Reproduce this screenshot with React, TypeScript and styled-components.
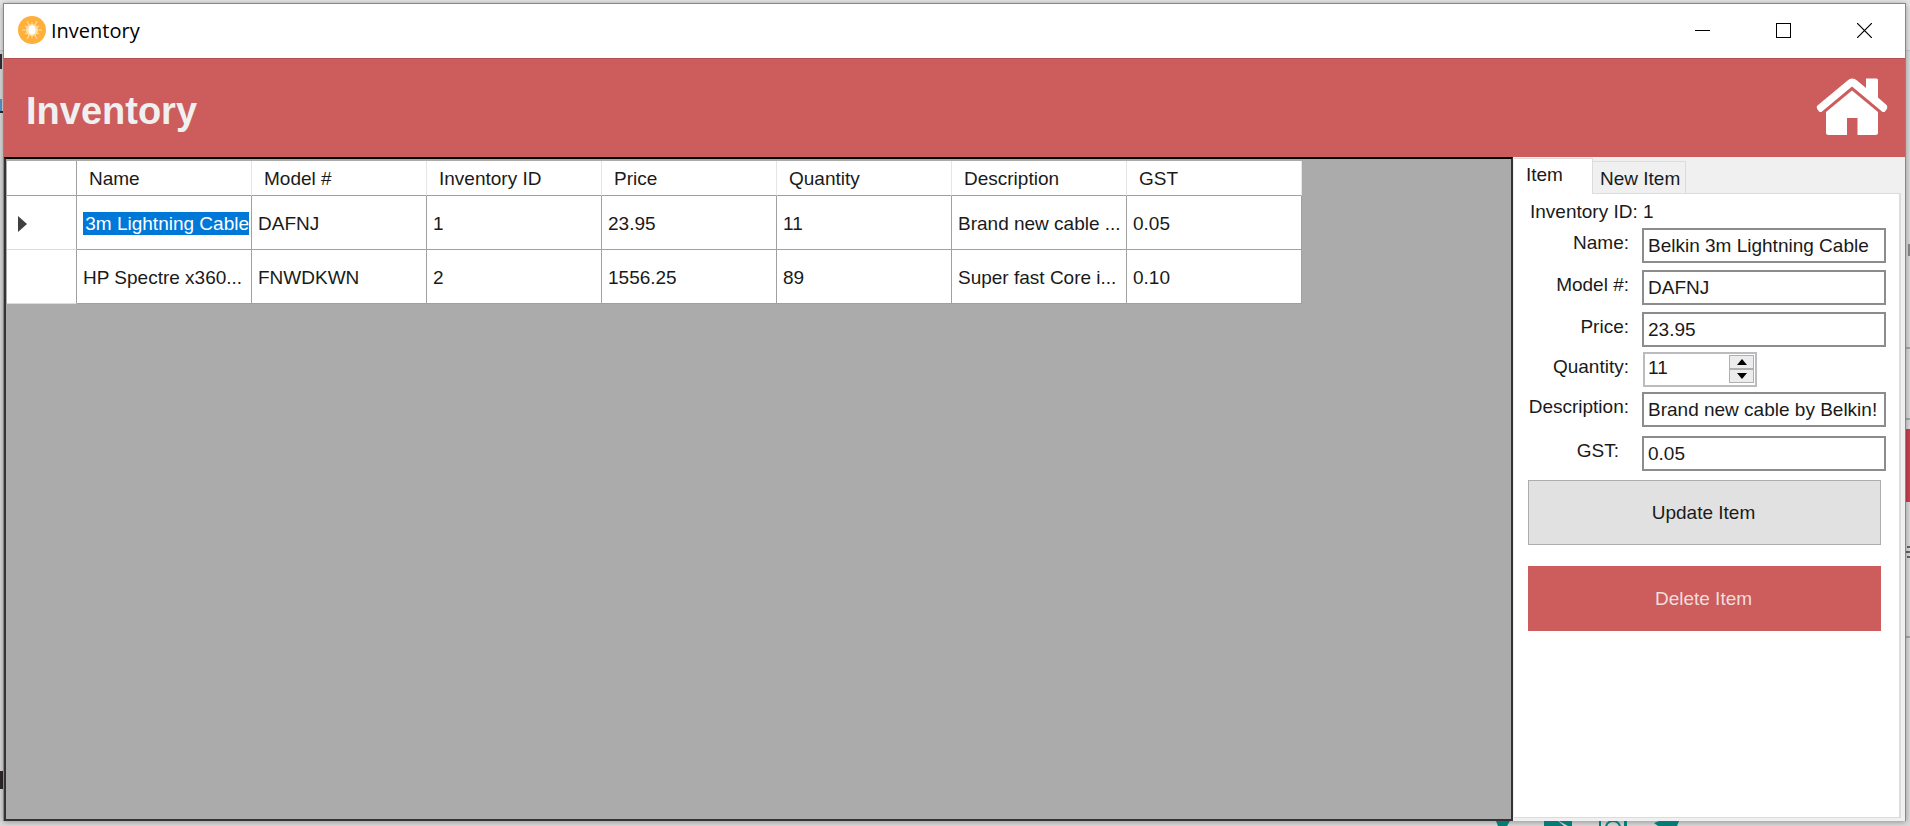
import React from "react";
import styled, { createGlobalStyle } from "styled-components";

const sans = `"Liberation Sans", Arial, sans-serif`;
const indianRed = "#cd5c5c";

const GlobalStyle = createGlobalStyle`
  *, *::before, *::after { box-sizing: border-box; }
  body { margin: 0; background: #e3e3e3; font-family: ${sans}; font-size: 19px; line-height: 24px; color: #1a1a1a; }
  button, input { font: inherit; color: inherit; border-radius: 0; margin: 0; }
`;

const Desktop = styled.div`
  position: relative;
  display: flex;
  min-height: 100vh;
  padding: 3px 4px 5px 3px;
  overflow: hidden;
  background: linear-gradient(#e6e6e6 0 50px, #c8c8c8 50px 51px, #dcdcdc 51px);
`;

/* Slivers of the page lying behind the window */
const Behind = styled.span<{ $side: "left" | "right"; $top: number; $height: number; $width: number; $color: string }>`
  position: absolute;
  ${(p) => p.$side}: 0;
  top: ${(p) => p.$top}px;
  width: ${(p) => p.$width}px;
  height: ${(p) => p.$height}px;
  background: ${(p) => p.$color};
`;

const BehindGlyphs = styled.svg`
  position: absolute;
  right: 230px;
  bottom: 0;
  width: 184px;
  height: 5px;
`;

const Window = styled.main`
  position: relative;
  flex: 1;
  min-width: 0;
  display: flex;
  flex-direction: column;
  background: #f0f0f0;
  border: 1px solid #4a9db5;
  border-bottom: 0;
  box-shadow: 0 1px 6px rgba(0, 0, 0, 0.35);
`;

const TitleBar = styled.div`
  display: flex;
  align-items: center;
  height: 54px;
  padding-left: 14px;
  background: #fff;
`;

const AppIcon = styled.svg`
  width: 28px;
  height: 28px;
  margin: 0 5px 2px 0;
`;

const Caption = styled.span`
  flex: 1;
  font-family: "Open Sans", "Segoe UI", sans-serif;
  font-size: 20px;
  color: #000;
`;

const CaptionButton = styled.button`
  display: grid;
  place-items: center;
  width: 81px;
  height: 54px;
  padding: 0 0 2px;
  border: 0;
  background: transparent;
`;

const Header = styled.header`
  display: flex;
  align-items: center;
  justify-content: space-between;
  height: 99px;
  padding: 0 17px 0 22px;
  background: ${indianRed};
  border-top: 1px solid #b65050;
`;

const Title = styled.h1`
  margin: 0;
  padding-top: 6px;
  font-size: 38px;
  line-height: 44px;
  color: #f0f0f0;
`;

const HomeButton = styled.button`
  display: block;
  width: 72px;
  height: 60px;
  padding: 0;
  border: 0;
  background: transparent;
  svg { display: block; }
`;

const Body = styled.div`
  flex: 1;
  display: flex;
`;

const GridPanel = styled.section`
  flex: 1;
  min-width: 0;
  padding: 2px 0 0 1px;
  background: #ababab;
  border: 2px solid #333;
  border-top-color: #000;
`;

const Table = styled.table`
  table-layout: fixed;
  width: 1295px;
  border-collapse: separate;
  border-spacing: 0;
  background: #fff;
`;

const Corner = styled.td`
  width: 70px;
  border-right: 1px solid #a0a0a0;
  border-bottom: 1px solid #a0a0a0;
`;

const ColumnHead = styled.th`
  width: 175px;
  height: 35px;
  padding: 2px 0 0 12px;
  text-align: left;
  font-weight: 400;
  border-right: 1px solid #e5e5e5;
  border-bottom: 1px solid #a0a0a0;
`;

const RowHead = styled.td`
  height: 54px;
  padding: 2px 0 0 11px;
  border-right: 1px solid #a0a0a0;
  border-bottom: 1px solid #dcdcdc;
  svg { display: block; }
`;

const Cell = styled.td`
  height: 54px;
  padding: 2px 2px 0 6px;
  white-space: nowrap;
  overflow: hidden;
  border-right: 1px solid #a0a0a0;
  border-bottom: 1px solid #a0a0a0;
`;

const Selection = styled.span`
  display: flex;
  justify-content: flex-end;
  height: 23px;
  line-height: 24px;
  overflow: hidden;
  background: #0078d7;
  color: #fff;
`;

const SidePanel = styled.aside`
  flex: 0 0 392px;
  display: flex;
  flex-direction: column;
  padding: 1px 4px 3px 1px;
`;

const Tabs = styled.div`
  display: flex;
  align-items: flex-end;
  height: 35px;
`;

const Tab = styled.button<{ $active?: boolean }>`
  position: relative;
  height: ${(p) => (p.$active ? 36 : 32)}px;
  width: ${(p) => (p.$active ? 79 : 93)}px;
  margin-bottom: ${(p) => (p.$active ? -1 : 0)}px;
  padding: ${(p) => (p.$active ? "0 0 4px 12px" : "2px 0 0 7px")};
  text-align: left;
  white-space: nowrap;
  background: ${(p) => (p.$active ? "#fff" : "#f0f0f0")};
  border: 1px solid #dcdcdc;
  border-width: 1px 1px 0 0;
`;

const TabPage = styled.div`
  flex: 1;
  padding: 6px 13px 12px 14px;
  background: #fff;
  border: solid #dcdcdc;
  border-width: 1px 2px 1px 0;
`;

const ItemId = styled.p`
  margin: 0 0 4px;
  padding-left: 2px;
`;

const Form = styled.form`
  display: grid;
  grid-template-columns: 101px 1fr;
  grid-template-rows: 42px 42px 40px 40px 44px 44px;
  column-gap: 13px;
  align-items: start;
`;

const Label = styled.label<{ $inset?: boolean }>`
  padding: 3px ${(p) => (p.$inset ? 10 : 0)}px 0 0;
  text-align: right;
  white-space: nowrap;
`;

const TextBox = styled.input`
  width: 100%;
  height: 35px;
  padding: 0 3px 0 4px;
  background: #fff;
  border: 2px solid #8c8c8c;
  outline: 0;
`;

const Spinner = styled.div`
  display: flex;
  width: 114px;
  height: 35px;
  margin-left: 1px;
  padding: 1px;
  border: 2px solid #bcbcc0;
`;

const SpinnerInput = styled.input`
  flex: 1;
  min-width: 0;
  padding: 0 0 4px 2px;
  border: 0;
  outline: 0;
`;

const SpinnerButtons = styled.div`
  display: flex;
  flex-direction: column;
  width: 25px;
  height: 28px;
`;

const SpinnerButton = styled.button`
  flex: 1;
  display: grid;
  place-items: center;
  padding: 0;
  background: #ececec;
  border: 1px solid #b0b0b0;
`;

const ActionButton = styled.button<{ $danger?: boolean }>`
  grid-column: 1 / -1;
  display: block;
  width: calc(100% - 5px);
  height: 65px;
  margin-bottom: 21px;
  padding: 0 2px 0 0;
  background: ${(p) => (p.$danger ? indianRed : "#e1e1e1")};
  color: ${(p) => (p.$danger ? "#f0dede" : "#1a1a1a")};
  border: ${(p) => (p.$danger ? `1px solid ${indianRed}` : "1px solid #adadad")};
`;

const columns = ["Name", "Model #", "Inventory ID", "Price", "Quantity", "Description", "GST"];
const rows = [
  ["Belkin 3m Lightning Cable", "DAFNJ", "1", "23.95", "11", "Brand new cable ...", "0.05"],
  ["HP Spectre x360...", "FNWDKWN", "2", "1556.25", "89", "Super fast Core i...", "0.10"],
];

const rays = Array.from({ length: 12 }, (_, i) => i * 30);

export default function App() {
  return (
    <Desktop>
      <GlobalStyle />
      <Behind $side="left" $top={54} $height={15} $width={2} $color="#3b2a35" />
      <Behind $side="left" $top={99} $height={12} $width={2} $color="#5b95d0" />
      <Behind $side="left" $top={111} $height={2} $width={3} $color="#2b2b2b" />
      <Behind $side="left" $top={771} $height={18} $width={3} $color="#30282c" />
      <Behind $side="right" $top={244} $height={12} $width={2} $color="#8a8a8a" />
      <Behind $side="right" $top={347} $height={2} $width={4} $color="#aaa" />
      <Behind $side="right" $top={418} $height={2} $width={4} $color="#aaa" />
      <Behind $side="right" $top={429} $height={73} $width={4} $color="#c9424f" />
      <Behind $side="right" $top={546} $height={2} $width={3} $color="#666" />
      <Behind $side="right" $top={551} $height={2} $width={4} $color="#666" />
      <Behind $side="right" $top={556} $height={2} $width={3} $color="#666" />
      <Behind $side="right" $top={636} $height={2} $width={4} $color="#aaa" />

      <Window>
        <TitleBar>
          <AppIcon viewBox="0 0 28 28" aria-hidden="true">
            <circle cx="14" cy="14" r="14" fill="#ffb03b" />
            <g stroke="#fff" strokeWidth="1" opacity="0.55">
              {rays.map((a) => (
                <path key={a} d={a % 60 ? "M14 9V4" : "M14 9V6"} transform={`rotate(${a} 14 14)`} />
              ))}
            </g>
            <circle cx="14" cy="14" r="6" fill="#ffdfa6" />
            <ellipse cx="14" cy="14" rx="3.5" ry="4.5" fill="#fff" />
          </AppIcon>
          <Caption>Inventory</Caption>
          <CaptionButton aria-label="Minimize">
            <svg width="15" height="15" shapeRendering="crispEdges"><path d="M0 7.5H15" stroke="#000" /></svg>
          </CaptionButton>
          <CaptionButton aria-label="Maximize">
            <svg width="15" height="15" shapeRendering="crispEdges"><path d="M.5.5h14v14H.5z" stroke="#000" fill="none" /></svg>
          </CaptionButton>
          <CaptionButton aria-label="Close">
            <svg width="15" height="15"><path d="M0 0L15 15M15 0L0 15" stroke="#000" strokeWidth="1.2" /></svg>
          </CaptionButton>
        </TitleBar>

        <Header>
          <Title>Inventory</Title>
          <HomeButton aria-label="Home">
            <svg width="72" height="60" viewBox="0 0 72 60" fill="#fff">
              <path d="M50 .5H60.500Q62 .5 62 2V19.500L70.500 27Q72 29 70.500 31.500L69 33.500Q67.500 34.500 66 33.500L36 8.500L6 33.500Q4.500 34.500 3 33.500L1.500 31.500Q0 29 1.500 27.500L31 3Q36 -1.500 41 2.500L50 10Z" />
              <path d="M36 12.500L62 34V54.500Q62 57 59.500 57H41.500V40H31V57H12.500Q10 57 10 54.500V34Z" />
            </svg>
          </HomeButton>
        </Header>

        <Body>
          <GridPanel>
            <Table>
              <thead>
                <tr>
                  <Corner />
                  {columns.map((c) => <ColumnHead key={c} scope="col">{c}</ColumnHead>)}
                </tr>
              </thead>
              <tbody>
                {rows.map((row, r) => (
                  <tr key={row[2]}>
                    <RowHead>
                      {r === 0 && (
                        <svg width="10" height="18" aria-hidden="true"><path d="M0 1L9 9L0 17Z" fill="#404040" /></svg>
                      )}
                    </RowHead>
                    {row.map((value, c) => (
                      <Cell key={columns[c]}>
                        {r === 0 && c === 0 ? <Selection>{value}</Selection> : value}
                      </Cell>
                    ))}
                  </tr>
                ))}
              </tbody>
            </Table>
          </GridPanel>

          <SidePanel>
            <Tabs role="tablist">
              <Tab $active role="tab" aria-selected="true">Item</Tab>
              <Tab role="tab" aria-selected="false">New Item</Tab>
            </Tabs>
            <TabPage role="tabpanel">
              <ItemId>Inventory ID: 1</ItemId>
              <Form onSubmit={(e) => e.preventDefault()}>
                <Label htmlFor="name">Name:</Label>
                <TextBox id="name" defaultValue="Belkin 3m Lightning Cable" />
                <Label htmlFor="model">Model #:</Label>
                <TextBox id="model" defaultValue="DAFNJ" />
                <Label htmlFor="price">Price:</Label>
                <TextBox id="price" defaultValue="23.95" />
                <Label htmlFor="quantity">Quantity:</Label>
                <Spinner>
                  <SpinnerInput id="quantity" inputMode="numeric" defaultValue="11" />
                  <SpinnerButtons>
                    <SpinnerButton type="button" aria-label="Increase">
                      <svg width="10" height="6"><path d="M0 6L5 0L10 6Z" /></svg>
                    </SpinnerButton>
                    <SpinnerButton type="button" aria-label="Decrease">
                      <svg width="10" height="6"><path d="M0 0L5 6L10 0Z" /></svg>
                    </SpinnerButton>
                  </SpinnerButtons>
                </Spinner>
                <Label htmlFor="description">Description:</Label>
                <TextBox id="description" defaultValue="Brand new cable by Belkin!" />
                <Label htmlFor="gst" $inset>GST:</Label>
                <TextBox id="gst" defaultValue="0.05" />
                <ActionButton type="submit">Update Item</ActionButton>
                <ActionButton type="button" $danger>Delete Item</ActionButton>
              </Form>
            </TabPage>
          </SidePanel>
        </Body>
      </Window>

      <BehindGlyphs viewBox="0 0 184 5" aria-hidden="true" fill="#057a76">
        <path d="M0 0H14L11 5H2Z" />
        <path d="M48 0H62L68 5H48ZM63 0H76V5H72Z" />
        <path d="M103 0H105V5H103ZM128 0H131V5H128Z" />
        <path d="M110 5Q112 0 117 0T124 5" fill="none" stroke="#057a76" strokeWidth="2" />
        <path d="M158 2L163 0H183L181 5H162Z" />
      </BehindGlyphs>
    </Desktop>
  );
}
